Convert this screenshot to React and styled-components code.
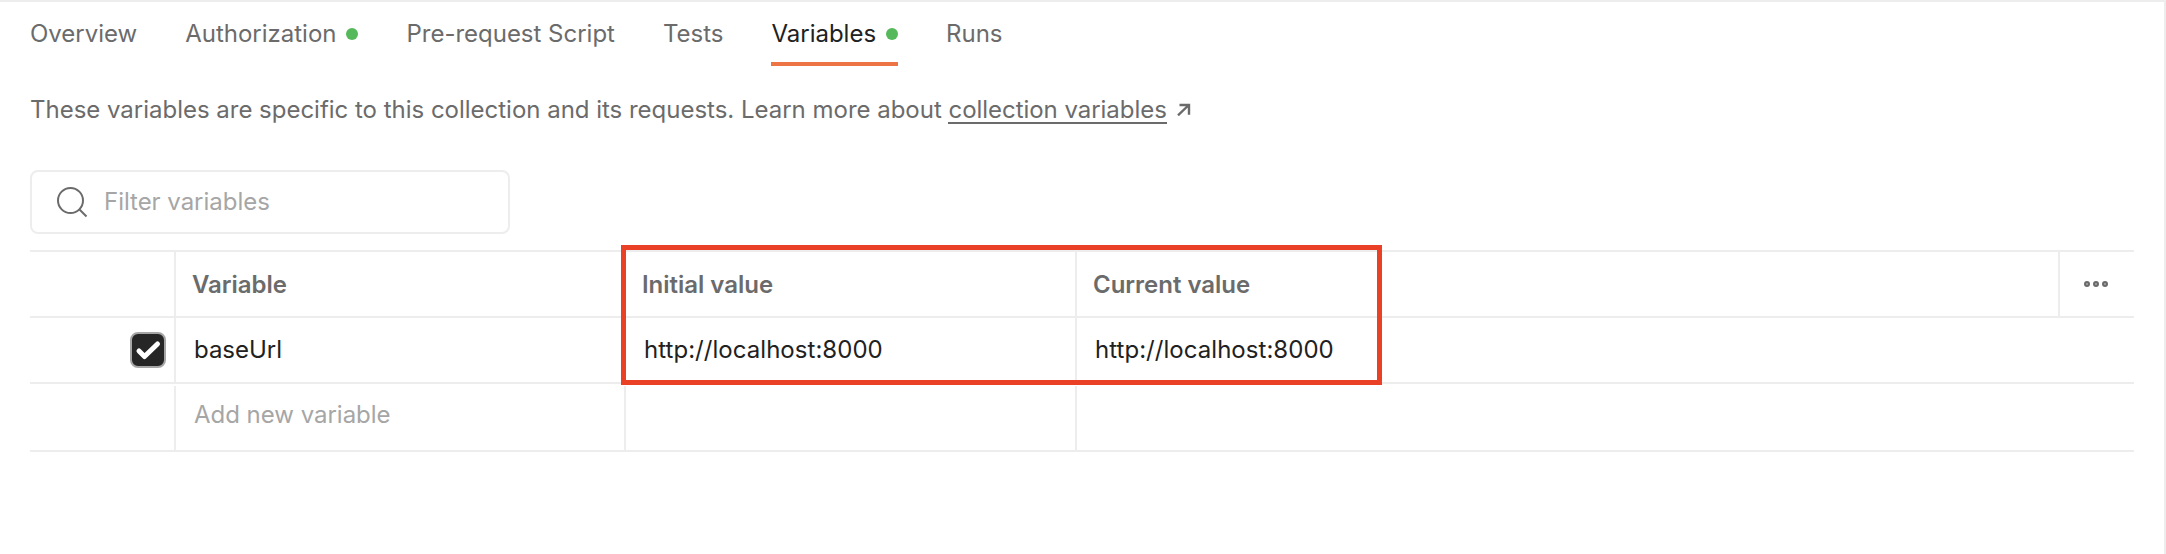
import React from "react";
import styled, { createGlobalStyle } from "styled-components";

const GlobalStyle = createGlobalStyle`
  * { box-sizing: border-box; }
  body { margin: 0; background: #fff; }
`;

const line = "#ededed";

const Panel = styled.main`
  height: 554px;
  border-top: 2px solid ${line};
  border-right: 2px solid ${line};
  padding: 0 30px;
  font-family: Inter, "Liberation Sans", sans-serif;
  font-size: 24px;
  line-height: 32px;
  color: #6b6b6b;
  background: #fff;
`;

const Tabs = styled.nav`
  display: flex;
  gap: 48px;
  height: 64px;
`;

const Tab = styled.a`
  display: flex;
  align-items: center;
  gap: 10px;
  height: 64px;
  padding-top: 4px;
  border-bottom: 4px solid ${(p) => (p.$active ? "#ed7545" : "transparent")};
  color: ${(p) => (p.$active ? "#212121" : "#6b6b6b")};
  letter-spacing: -0.01px;
`;

const StatusDot = styled.span`
  width: 12px;
  height: 12px;
  border-radius: 50%;
  background: #55b95b;
`;

const Description = styled.p`
  display: flex;
  align-items: flex-start;
  margin: 28px 0 0;
  height: 32px;
  white-space: pre;
  letter-spacing: -0.015px;
`;

const DocsLink = styled.a`
  height: 30px;
  border-bottom: 2px solid #6b6b6b;
  letter-spacing: -0.04px;
`;

const ArrowIcon = styled.svg`
  width: 14px;
  height: 14px;
  margin: 8px 0 0 10px;
`;

const Filter = styled.label`
  display: flex;
  align-items: center;
  gap: 16px;
  width: 480px;
  height: 64px;
  margin-top: 44px;
  padding-left: 25px;
  border: 2px solid ${line};
  border-radius: 8px;
  color: #a6a6a6;
  letter-spacing: -0.03px;
`;

const SearchIcon = styled.svg`
  width: 31px;
  height: 31px;
`;

const Table = styled.section`
  position: relative;
  margin-top: 16px;
  border-top: 2px solid ${line};
`;

const Row = styled.div`
  display: grid;
  grid-template-columns: 144px 450px 451px 1fr ${(p) => (p.$head ? "76px" : "")};
  height: ${(p) => (p.$last ? "68px" : "66px")};
  padding-top: ${(p) => (p.$last ? "2px" : "0")};
  border-bottom: 2px solid ${line};
  font-weight: ${(p) => (p.$head ? 600 : 400)};
  color: ${(p) => (p.$head ? "#6b6b6b" : p.$last ? "#a6a6a6" : "#212121")};
`;

const Cell = styled.div`
  display: flex;
  align-items: center;
  padding-left: ${(p) => (p.$head ? "16px" : "18px")};
  padding-top: ${(p) => (p.$head ? "2px" : "0")};
  padding-bottom: ${(p) => (p.$raised ? "6px" : "0")};
  border-left: 2px solid ${line};
  letter-spacing: ${(p) => (p.$url ? "0.04px" : "-0.02px")};
`;

const SelectCell = styled.div`
  display: flex;
  align-items: center;
  justify-content: flex-end;
  padding-right: 8px;
`;

const MenuCell = styled.div`
  display: flex;
  align-items: center;
  padding-left: 24px;
  border-left: 2px solid ${line};
`;

const Checkbox = styled.span`
  display: grid;
  place-items: center;
  width: 36px;
  height: 36px;
  border: 2px solid #a6a6a6;
  border-radius: 8px;
  background: #262626;
`;

const Highlight = styled.div`
  position: absolute;
  left: 591px;
  top: -7px;
  width: 761px;
  height: 140px;
  border: 5px solid #ea4025;
  pointer-events: none;
`;

const tabs = [
  { name: "Overview" },
  { name: "Authorization", dot: true },
  { name: "Pre-request Script" },
  { name: "Tests" },
  { name: "Variables", dot: true, active: true },
  { name: "Runs" },
];

export default function App() {
  return (
    <>
      <GlobalStyle />
      <Panel>
        <Tabs>
          {tabs.map((t) => (
            <Tab key={t.name} $active={t.active}>
              <span>{t.name}</span>
              {t.dot && <StatusDot />}
            </Tab>
          ))}
        </Tabs>
        <Description>
          <span>These variables are specific to this collection and its requests. Learn more about </span>
          <DocsLink>collection variables</DocsLink>
          <ArrowIcon viewBox="0 0 14 14" fill="none" stroke="#6b6b6b" strokeWidth="2.4">
            <path d="M1 13.300 11.800 3M2.500 3H12v9.700" />
          </ArrowIcon>
        </Description>
        <Filter>
          <SearchIcon viewBox="0 0 31 31" fill="none" stroke="#6b6b6b" strokeWidth="2">
            <circle cx="13.500" cy="13.500" r="12.500" />
            <path d="m22 22 7.500 7.500" />
          </SearchIcon>
          <span>Filter variables</span>
        </Filter>
        <Table>
          <Row $head>
            <SelectCell />
            <Cell $head>Variable</Cell>
            <Cell $head>Initial value</Cell>
            <Cell $head>Current value</Cell>
            <MenuCell>
              <svg width="24" height="6" viewBox="0 0 24 6" fill="#a6a6a6" stroke="#6b6b6b" strokeWidth="2">
                <circle cx="3" cy="3" r="2" />
                <circle cx="12" cy="3" r="2" />
                <circle cx="21" cy="3" r="2" />
              </svg>
            </MenuCell>
          </Row>
          <Row>
            <SelectCell>
              <Checkbox>
                <svg width="32" height="32" viewBox="0 0 32 32" fill="none" stroke="#fff" strokeWidth="5" strokeLinecap="round" strokeLinejoin="round">
                  <path d="m7 17 5.500 5.500L25.500 10" />
                </svg>
              </Checkbox>
            </SelectCell>
            <Cell>baseUrl</Cell>
            <Cell $url>http://localhost:8000</Cell>
            <Cell $url>http://localhost:8000</Cell>
          </Row>
          <Row $last>
            <SelectCell />
            <Cell $raised>Add new variable</Cell>
            <Cell />
            <Cell />
          </Row>
          <Highlight />
        </Table>
      </Panel>
    </>
  );
}
